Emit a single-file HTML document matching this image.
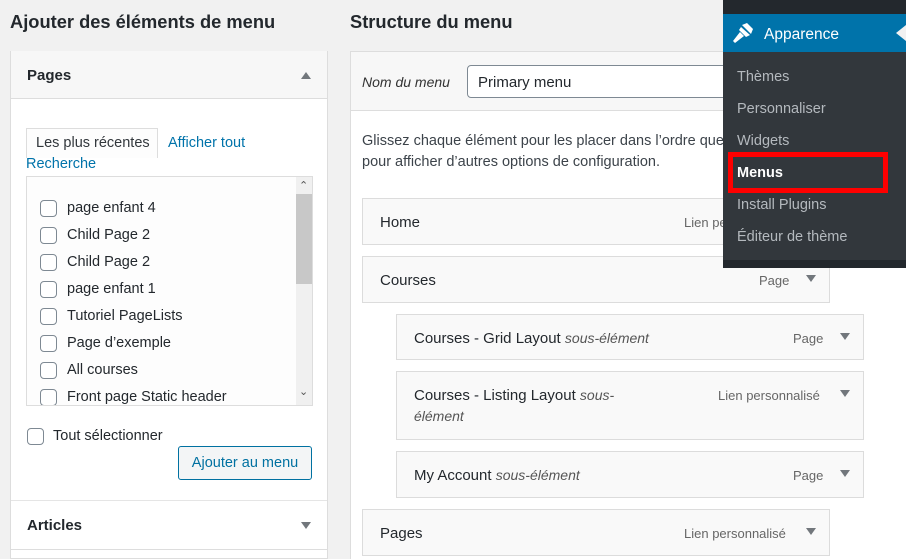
<!DOCTYPE html>
<html><head><meta charset="utf-8"><style>
*{box-sizing:border-box;margin:0;padding:0}
body{width:906px;height:559px;overflow:hidden;background:#f1f1f1;font-family:"Liberation Sans","DejaVu Sans",sans-serif;color:#23282d;position:relative;font-size:14px}
.a{position:absolute;white-space:nowrap}
h2{position:absolute;font-size:18.3px;font-weight:600;color:#23282d}
.cb{position:absolute;width:17px;height:17px;border:1px solid #7e8993;border-radius:4px;background:#fff}
.item{position:absolute;background:#f9f9f9;border:1px solid #dcdcdc}
.item .t{position:absolute;left:17px;top:15px;font-size:15px;color:#23282d;font-weight:500}
.item .t i{font-size:14px;color:#555;font-weight:normal}
.item .ty{position:absolute;top:16px;font-size:13px;color:#666}
.arr{position:absolute;width:0;height:0;border-left:5px solid transparent;border-right:5px solid transparent;border-top:7px solid #72777c}
.sub{position:absolute;left:737px;font-size:14.5px;color:#b4b9be}
</style></head><body>
<h2 style="left:10px;top:11px">Ajouter des éléments de menu</h2>
<h2 style="left:350px;top:11px">Structure du menu</h2>

<div class="a" style="left:10px;top:51px;width:318px;height:508px;background:#fff;border:1px solid #ddd"></div>
<div class="a" style="left:11px;top:51px;width:316px;height:48px;background:#f7f7f7;border-bottom:1px solid #ddd"></div>
<div class="a" style="left:27px;top:67px;font-size:15px;font-weight:bold">Pages</div>
<div class="a" style="left:301px;top:72px;width:0;height:0;border-left:5px solid transparent;border-right:5px solid transparent;border-bottom:7px solid #72777c"></div>
<div class="a" style="left:26px;top:128px;width:132px;height:30px;border:1px solid #ddd;border-bottom:none;background:#fdfdfd"></div>
<div class="a" style="left:36px;top:135px;font-size:14.5px;color:#32373c">Les plus récentes</div>
<div class="a" style="left:168px;top:135px;font-size:14.5px;color:#0073aa">Afficher tout</div>
<div class="a" style="left:26px;top:156px;font-size:14.5px;color:#0073aa">Recherche</div>
<div class="a" style="left:26px;top:176px;width:287px;height:230px;border:1px solid #ddd;background:#fdfdfd;overflow:hidden">
 <div class="a" style="left:269px;top:0;width:16px;height:228px;background:#f0f0f0"></div>
 <div class="a" style="left:269px;top:17px;width:16px;height:90px;background:#c8c8c8"></div>
 <div class="a" style="left:272px;top:2px;font-size:11px;color:#555">&#8963;</div>
 <div class="a" style="left:272px;top:208px;font-size:11px;color:#555">&#8964;</div>
 <div class="cb" style="left:13px;top:23px"></div><div class="a" style="left:40px;top:23px;font-size:14.5px">page enfant 4</div>
 <div class="cb" style="left:13px;top:50px"></div><div class="a" style="left:40px;top:50px;font-size:14.5px">Child Page 2</div>
 <div class="cb" style="left:13px;top:77px"></div><div class="a" style="left:40px;top:77px;font-size:14.5px">Child Page 2</div>
 <div class="cb" style="left:13px;top:104px"></div><div class="a" style="left:40px;top:104px;font-size:14.5px">page enfant 1</div>
 <div class="cb" style="left:13px;top:131px"></div><div class="a" style="left:40px;top:131px;font-size:14.5px">Tutoriel PageLists</div>
 <div class="cb" style="left:13px;top:158px"></div><div class="a" style="left:40px;top:158px;font-size:14.5px">Page d’exemple</div>
 <div class="cb" style="left:13px;top:185px"></div><div class="a" style="left:40px;top:185px;font-size:14.5px">All courses</div>
 <div class="cb" style="left:13px;top:212px"></div><div class="a" style="left:40px;top:212px;font-size:14.5px">Front page Static header</div>
</div>
<div class="cb" style="left:27px;top:428px"></div>
<div class="a" style="left:53px;top:428px;font-size:14.5px">Tout sélectionner</div>
<div class="a" style="left:178px;top:446px;width:134px;height:34px;border:1px solid #0071a1;border-radius:3px;background:#f3f5f6;color:#0071a1;font-size:14.5px;text-align:center;line-height:33px">Ajouter au menu</div>
<div class="a" style="left:11px;top:500px;width:316px;height:1px;background:#e5e5e5"></div>
<div class="a" style="left:27px;top:517px;font-size:15px;font-weight:bold">Articles</div>
<div class="arr" style="left:301px;top:522px"></div>
<div class="a" style="left:11px;top:549px;width:316px;height:1px;background:#ddd"></div>

<div class="a" style="left:350px;top:51px;width:556px;height:508px;background:#fff;border-left:1px solid #ddd;border-top:1px solid #ddd"></div>
<div class="a" style="left:351px;top:52px;width:555px;height:59px;background:#f7f7f7;border-bottom:1px solid #ddd"></div>
<div class="a" style="left:362px;top:74px;font-size:14px;font-style:italic;color:#333">Nom du menu</div>
<div class="a" style="left:467px;top:65px;width:300px;height:33px;border:1px solid #7e8993;border-radius:4px;background:#fff"></div>
<div class="a" style="left:478px;top:74px;font-size:15px">Primary menu</div>
<div class="a" style="left:362px;top:131px;font-size:14.5px;color:#3c434a;line-height:21px">Glissez chaque élément pour les placer dans l’ordre que vous préférez.<br>pour afficher d’autres options de configuration.</div>

<div class="item" style="left:362px;top:198px;width:468px;height:47px"><div class="t">Home</div><div class="ty" style="left:321px">Lien personnalisé</div><div class="arr" style="left:443px;top:18px"></div></div>
<div class="item" style="left:362px;top:256px;width:468px;height:47px"><div class="t">Courses</div><div class="ty" style="left:396px">Page</div><div class="arr" style="left:443px;top:18px"></div></div>
<div class="item" style="left:396px;top:314px;width:468px;height:46px"><div class="t">Courses - Grid Layout <i>sous-élément</i></div><div class="ty" style="left:396px">Page</div><div class="arr" style="left:443px;top:18px"></div></div>
<div class="item" style="left:396px;top:371px;width:468px;height:69px"><div class="t" style="line-height:21px;top:13px">Courses - Listing Layout <i>sous-</i><br><i>élément</i></div><div class="ty" style="left:321px">Lien personnalisé</div><div class="arr" style="left:443px;top:18px"></div></div>
<div class="item" style="left:396px;top:451px;width:468px;height:47px"><div class="t">My Account <i>sous-élément</i></div><div class="ty" style="left:396px">Page</div><div class="arr" style="left:443px;top:18px"></div></div>
<div class="item" style="left:362px;top:509px;width:468px;height:47px"><div class="t">Pages</div><div class="ty" style="left:321px">Lien personnalisé</div><div class="arr" style="left:443px;top:18px"></div></div>

<div class="a" style="left:723px;top:0;width:183px;height:268px;background:#23282d"></div>
<div class="a" style="left:723px;top:14px;width:183px;height:38px;background:#0073aa"></div>
<div class="a" style="left:723px;top:52px;width:183px;height:208px;background:#32373c"></div>
<svg class="a" style="left:732px;top:23px" width="22" height="20" viewBox="0 0 22 20"><path d="M10 2 L15 0 L21 6 L19 11 Z" fill="#fff"/><path d="M9 4 L18 12 L14 14 L7 7 Z" fill="#fff"/><path d="M8 9 L12 13 L3 20 L1 18 Z" fill="#fff"/></svg>
<div class="a" style="left:764px;top:26px;font-size:15.5px;color:#fff">Apparence</div>
<div class="a" style="left:896px;top:25px;width:0;height:0;border-top:8px solid transparent;border-bottom:8px solid transparent;border-right:10px solid #f1f1f1"></div>
<div class="sub" style="top:69px">Thèmes</div>
<div class="sub" style="top:101px">Personnaliser</div>
<div class="sub" style="top:133px">Widgets</div>
<div class="sub" style="top:165px;color:#fff;font-weight:bold">Menus</div>
<div class="sub" style="top:197px">Install Plugins</div>
<div class="sub" style="top:229px">Éditeur de thème</div>
<div class="a" style="left:728px;top:152px;width:160px;height:41px;border:5px solid #f00"></div>
</body></html>
